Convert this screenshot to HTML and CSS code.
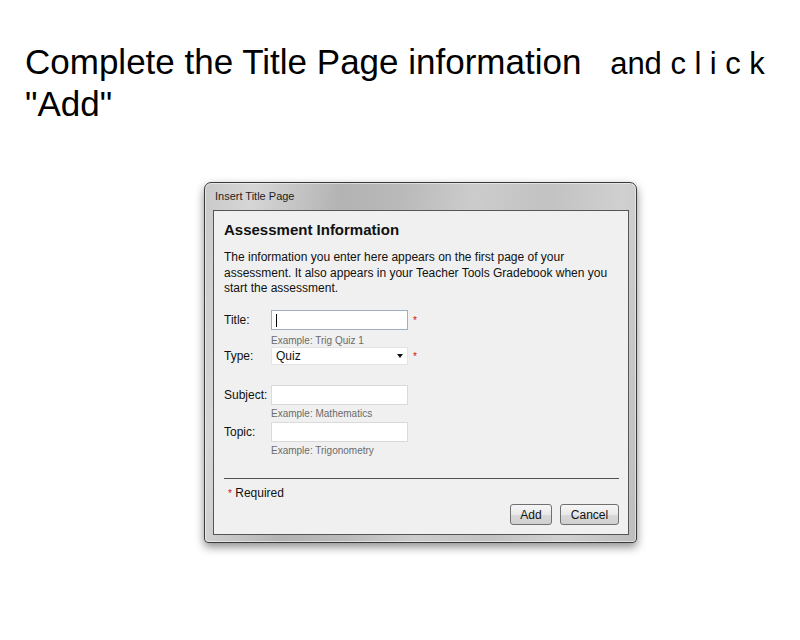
FILE: index.html
```html
<!DOCTYPE html>
<html>
<head>
<meta charset="utf-8">
<link rel="stylesheet" href="styles.css">
</head>
<body>
<h1 class="headline">Complete the Title Page information <span class="tail"><span class="gap"></span>and <span class="spaced">click</span></span><br>"Add"</h1>
<div class="window">
  <div class="titlebar">Insert Title Page</div>
  <div class="panel">
    <h2 class="panel-title">Assessment Information</h2>
    <p class="intro">The information you enter here appears on the first page of your assessment. It also appears in your Teacher Tools Gradebook when you start the assessment.</p>
    <div class="form">
      <label class="lbl">Title:</label>
      <div class="field focus"><span class="caret"></span></div>
      <span class="req">*</span>
      <span></span><div class="hint hint-tight">Example: Trig Quiz 1</div><span></span>
      <label class="lbl sel-lbl">Type:</label>
      <div class="select">Quiz<span class="arrow"></span></div>
      <span class="req sel-req">*</span>
      <div class="spacer"></div>
      <label class="lbl">Subject:</label>
      <div class="field"></div>
      <span></span>
      <span></span><div class="hint">Example: Mathematics</div><span></span>
      <label class="lbl">Topic:</label>
      <div class="field"></div>
      <span></span>
      <span></span><div class="hint">Example: Trigonometry</div><span></span>
    </div>
    <div class="footer">
      <div class="required"><span class="req">*</span> Required</div>
      <div class="buttons">
        <button class="btn add">Add</button>
        <button class="btn cancel">Cancel</button>
      </div>
    </div>
  </div>
</div>
</body>
</html>
```
FILE: styles.css
```css
html, body {
  margin: 0;
  padding: 0;
  background: #ffffff;
}
body {
  width: 800px;
  height: 640px;
  overflow: hidden;
  font-family: "Liberation Sans", Arial, sans-serif;
}
.headline {
  margin: 0;
  padding: 41px 0 0 25px;
  font-weight: normal;
  font-size: 35px;
  line-height: 42px;
  color: #000;
  white-space: nowrap;
}
.tail {
  font-size: 31px;
  line-height: 1;
}
.gap {
  display: inline-block;
  width: 19px;
}
.spaced {
  letter-spacing: 8.5px;
}
.window {
  margin: 57px 0 0 204px;
  box-sizing: border-box;
  width: 433px;
  height: 361px;
  border: 1px solid #3a3a3a;
  border-radius: 7px 7px 4px 4px;
  background: linear-gradient(100deg, #c9c9c9 0%, #d6d6d6 10%, #b3b3b3 28%, #b9b9b9 40%, #cccccc 55%, #c2c2c2 70%, #d0d0d0 85%, #bdbdbd 100%);
  box-shadow: 0 4px 10px rgba(0,0,0,0.45), inset 0 0 0 1px rgba(255,255,255,0.5);
  display: flex;
  flex-direction: column;
  padding: 0 7px 7px 8px;
}
.titlebar {
  height: 27px;
  font-size: 11px;
  line-height: 27px;
  padding-left: 2px;
  color: #1e1e1e;
  font-family: "Liberation Sans", Arial, sans-serif;
}
.panel {
  flex: 1;
  background: #f0f0f0;
  border: 1px solid #555;
  padding: 9px 9px 9px 10px;
  display: flex;
  flex-direction: column;
  color: #111;
}
.panel-title {
  margin: 0;
  font-size: 15px;
  line-height: 19px;
  font-weight: bold;
  color: #111;
}
.intro {
  margin: 11px 0 0;
  font-size: 12px;
  line-height: 15.5px;
  width: 390px;
}
.form {
  margin-top: 13px;
  display: grid;
  grid-template-columns: 47px 137px auto;
  align-items: start;
}
.lbl {
  font-size: 12px;
  line-height: 20px;
}
.sel-lbl {
  line-height: 19px;
}
.field {
  height: 20px;
  background: #fff;
  border: 1px solid #dadada;
  box-sizing: border-box;
  position: relative;
}
.field.focus {
  border: 1px solid #9fb0c4;
}
.caret {
  position: absolute;
  left: 4px;
  top: 3px;
  width: 1px;
  height: 13px;
  background: #000;
}
.req {
  color: #d01010;
  font-size: 10px;
  line-height: 22px;
  padding-left: 5px;
}
.sel-req {
  line-height: 20px;
}
.hint {
  font-size: 10px;
  line-height: 12px;
  color: #6b6b6b;
  margin: 3px 0 2px;
}
.hint-tight {
  margin-bottom: 0;
}
.select {
  height: 18px;
  background: #fff;
  border: 1px solid #e4e4e4;
  box-sizing: border-box;
  font-size: 12px;
  line-height: 16px;
  padding-left: 4px;
  position: relative;
}
.arrow {
  position: absolute;
  right: 4px;
  top: 6px;
  width: 0;
  height: 0;
  border-left: 3.5px solid transparent;
  border-right: 3.5px solid transparent;
  border-top: 4px solid #111;
}
.spacer {
  grid-column: 1 / 4;
  height: 18px;
}
.footer {
  margin-top: auto;
  border-top: 1px solid #505050;
  padding-top: 7px;
  display: flex;
  flex-direction: column;
}
.required {
  font-size: 12px;
  line-height: 14px;
  padding-left: 4px;
}
.required .req {
  padding-left: 0;
  line-height: 14px;
}
.buttons {
  margin-top: 3px;
  display: flex;
  justify-content: flex-end;
  gap: 8px;
}
.btn {
  height: 21px;
  padding: 0;
  border: 1px solid #707070;
  border-radius: 3px;
  background: linear-gradient(#f6f6f6 0%, #e9e9e9 50%, #d9d9d9 51%, #d0d0d0 100%);
  font-family: "Liberation Sans", Arial, sans-serif;
  font-size: 12px;
  color: #111;
}
.btn.add { width: 42px; }
.btn.cancel { width: 59px; }
```
